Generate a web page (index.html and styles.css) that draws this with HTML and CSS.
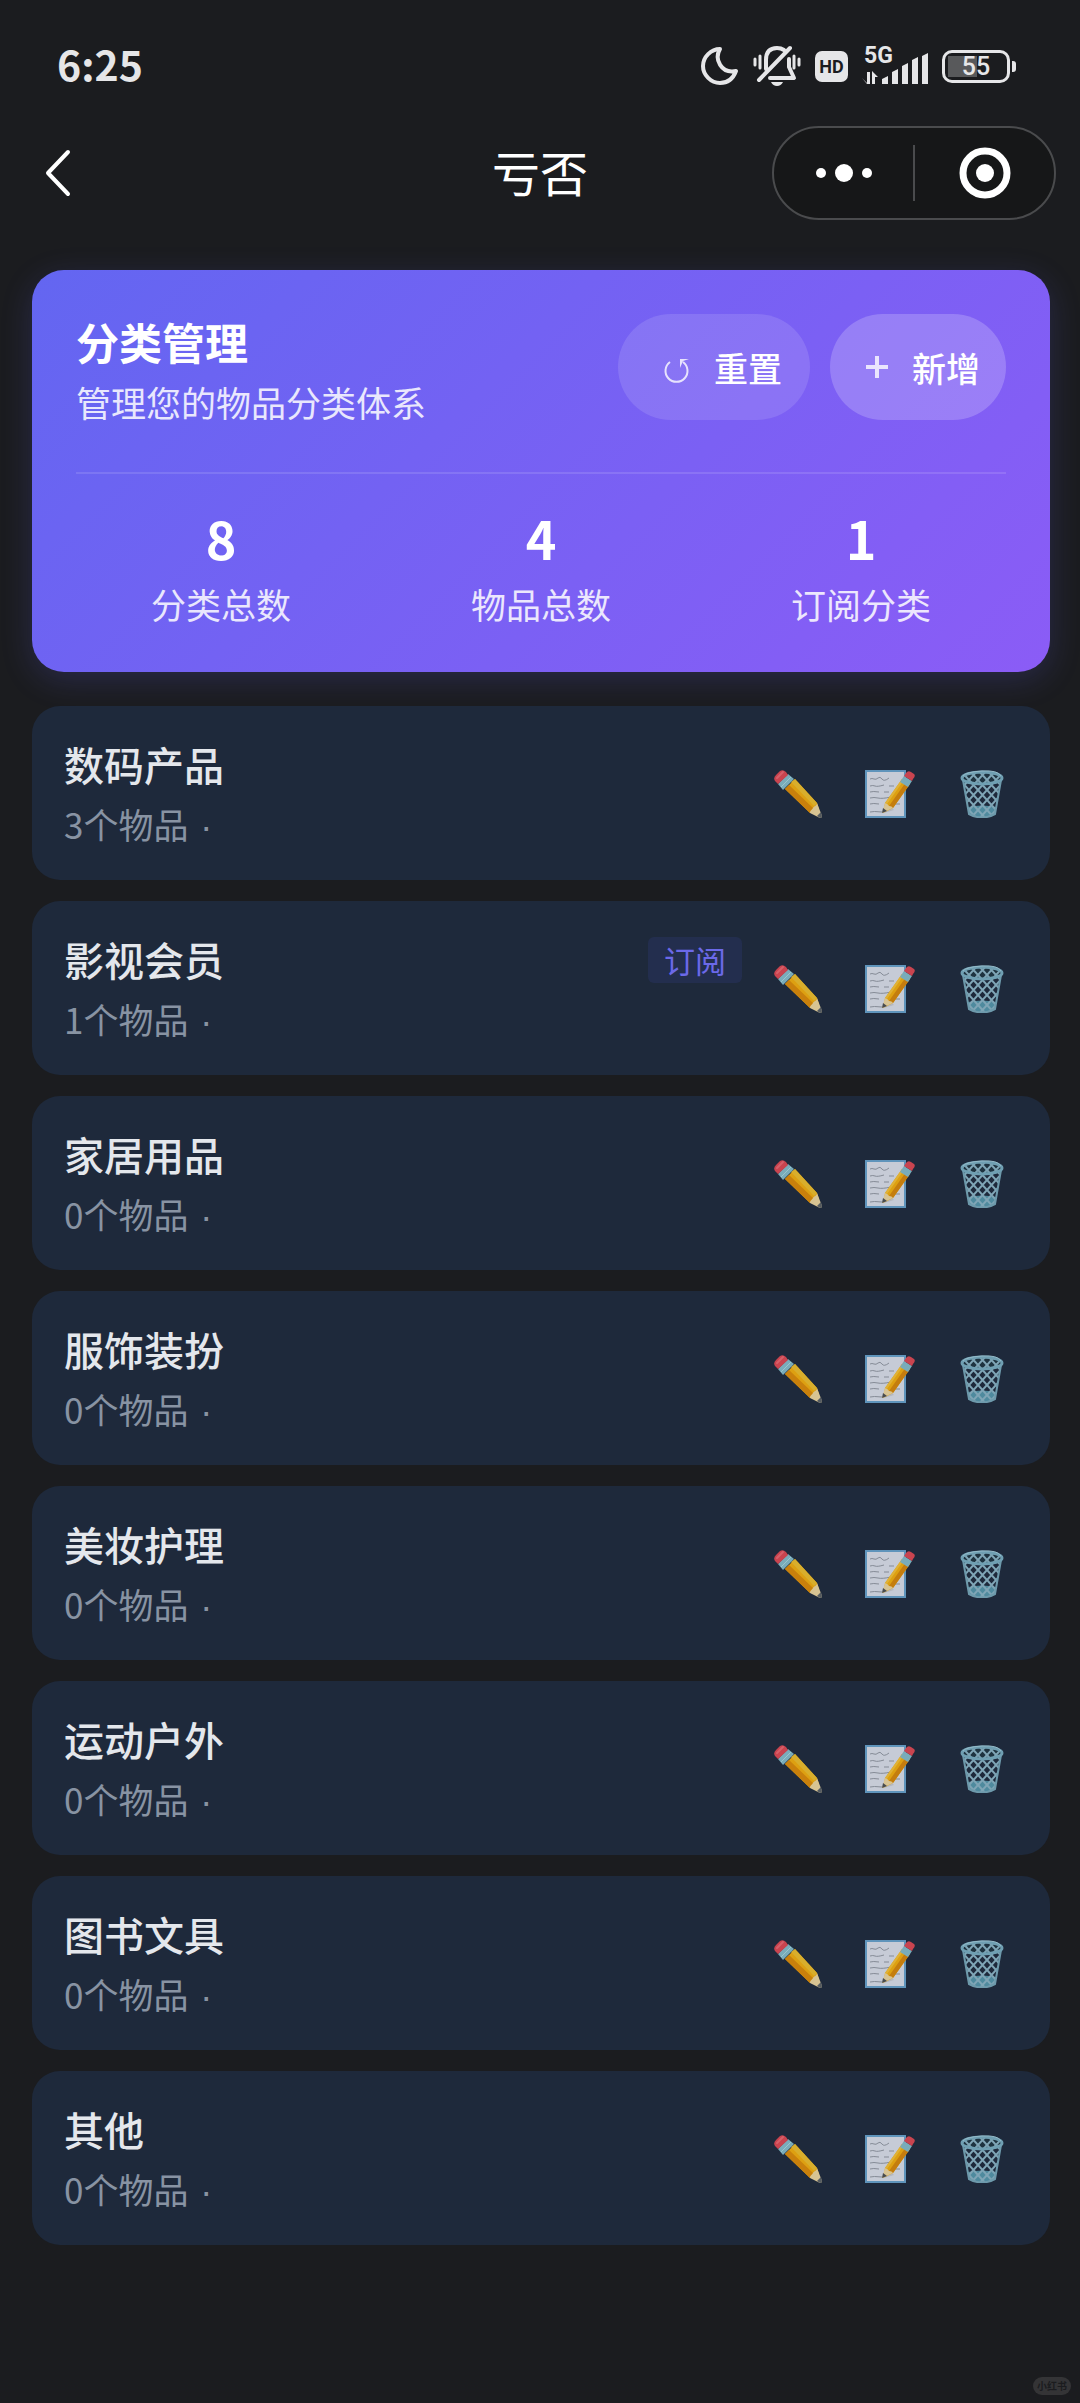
FILE: index.html
```html
<!DOCTYPE html>
<html lang="zh-CN">
<head>
  <meta charset="UTF-8">
  <meta name="viewport" content="width=device-width, initial-scale=1.0">
  <title>亏否</title>
  <link rel="stylesheet" href="styles.css">
</head>
<body>

  <!-- shared icons for the category rows -->
  <svg class="sprite" aria-hidden="true">
    <defs>
      <pattern id="mesh" width="9" height="10" patternUnits="userSpaceOnUse">
        <path d="M0 0L9 10M9 0L0 10" stroke="#7fa5b6" stroke-width="2" fill="none"/>
      </pattern>
    </defs>
    <symbol id="pencil" viewBox="0 0 48 48">
      <path d="M11 19L21 9L43 33L45 39L36 43Z" fill="#dda012"/>
      <path d="M11 19L15 15L39 38L36 43Z" fill="#c9800c"/>
      <path d="M21 9L17 12L40 36L43 33Z" fill="#d9ae2c"/>
      <path d="M36 43C36 40 38 40 39 38C40 36 43 36 43 33L48 46Q48 48 46 48Z" fill="#d8c493"/>
      <path d="M43 46L47 42L48 46Q48 48 46 48Z" fill="#555b60"/>
      <path d="M4 14L14 4L20 9L9 20Z" fill="#79acba"/>
      <path d="M7 17L17 7" stroke="#9bc5cd" stroke-width="1"/>
      <path d="M1 11Q-1 8 2 5L6 1Q9 -1 12 2L14 5L4 14Z" fill="#c9444f"/>
      <path d="M3 8L9 2" stroke="#d65f6a" stroke-width="2" stroke-linecap="round"/>
    </symbol>
    <symbol id="memo" viewBox="0 0 50 48">
      <rect x="1" y="1" width="39" height="46" fill="#c6cbd6" stroke="#5f94bb" stroke-width="2"/>
      <path d="M5 9q2-1 4 0t4-1 4 1 7-1M5 16q3-1 5 0t9-1M24 16h5M5 22q3-1 9 0M19 22h5M5 28q4-1 8 0t13-1M5 34q3-1 9 0M5 42q3-1 12 0M27 34h8" fill="none" stroke="#858b96" stroke-width="1"/>
      <path d="M19 43L29 40L24 35Z" fill="#b5b8bf"/>
      <path d="M18 43L20 33L37 9L45 14L28 38Z" fill="#dda012"/>
      <path d="M24 36L41 12L45 14L28 38Z" fill="#c47d0e"/>
      <path d="M20 33L37 9L39 10L22 34Z" fill="#e0b236"/>
      <path d="M17 43L20 33Q23 34 24 36Q27 36 28 38Z" fill="#d8c493"/>
      <path d="M17 43L18 38L22 41Z" fill="#474b50"/>
      <path d="M35 12L39 6L47 11L43 17Z" fill="#79acba"/>
      <path d="M39 6L41 3Q43 0 46 2L49 4Q51 6 48 9L47 11Z" fill="#c9444f"/>
    </symbol>
    <symbol id="trash" viewBox="0 0 44 48">
      <path d="M8 37Q22 34 36 37L35 44Q22 51 9 44Z" fill="#4f8a9e"/>
      <path d="M3 10L9 44Q22 51 35 44L41 10Z" fill="url(#mesh)"/>
      <path d="M3 10L9 44Q22 51 35 44L41 10" fill="none" stroke="#6d99ab" stroke-width="2"/>
      <ellipse cx="22" cy="8" rx="20" ry="6" fill="#1e3340"/>
      <ellipse cx="22" cy="8" rx="20" ry="6" fill="url(#mesh)" stroke="#6f9fb2" stroke-width="3"/>
      <path d="M3 6Q6 2 22 1T41 6" fill="none" stroke="#94bac8" stroke-width="1"/>
    </symbol>
  </svg>

  <div class="status-bar">
    <span class="time">6:25</span>
    <div class="status-icons">
      <svg class="moon" width="38" height="38" viewBox="0 0 38 38">
        <path d="M19 2C13 12 20 27 35 24C32 32 26 36 19 36C10 36 2 28 2 19C2 10 10 2 19 2Z" fill="none" stroke="#e6e6e8" stroke-width="4" stroke-linejoin="round"/>
      </svg>
      <svg class="bell" width="48" height="42" viewBox="0 0 48 42" fill="none" stroke="#e6e6e8" stroke-linecap="round">
        <path d="M2 14v6M7 11v12M41 11v12M46 14v6" stroke-width="3"/>
        <path d="M13 24V15Q13 3 24 3Q28 3 31 5M36 14V22L41 33H17" stroke-width="4" stroke-linejoin="round"/>
        <path d="M6 35L37 3" stroke-width="4"/>
        <path d="M18 37H30Q28 41 24 41T18 37Z" fill="#e6e6e8" stroke="none"/>
      </svg>
      <span class="hd">HD</span>
      <div class="signal">
        <span class="network">5G</span>
        <svg width="66" height="36" viewBox="0 0 66 36" fill="#e6e6e8">
          <path d="M0 30L5 35V24H8V36H5ZM10 36V23L16 29H13V36Z"/>
          <path d="M20 36V31L26 28V36ZM30 36V24L36 21V36ZM40 36V18L46 15V36ZM50 36V12L56 9V36ZM60 36V8L66 5V36Z"/>
        </svg>
      </div>
      <div class="battery"><span>55</span></div>
    </div>
  </div>

  <header class="nav">
    <button class="back" type="button" aria-label="返回">
      <svg width="28" height="48" viewBox="0 0 28 48">
        <path d="M24 3L4 24L24 45" fill="none" stroke="#fff" stroke-width="4" stroke-linecap="round" stroke-linejoin="round"/>
      </svg>
    </button>
    <h1>亏否</h1>
    <div class="capsule">
      <button type="button" aria-label="更多">
        <svg width="56" height="20" viewBox="0 0 56 20" fill="#fff">
          <circle cx="5" cy="10" r="5"/><circle cx="28" cy="10" r="9"/><circle cx="51" cy="10" r="5"/>
        </svg>
      </button>
      <button type="button" aria-label="关闭">
        <svg width="52" height="52" viewBox="0 0 52 52">
          <circle cx="26" cy="26" r="22" fill="none" stroke="#fff" stroke-width="7"/>
          <circle cx="26" cy="26" r="9" fill="#fff"/>
        </svg>
      </button>
    </div>
  </header>

  <main>
    <section class="summary">
      <div class="summary-head">
        <div>
          <h2>分类管理</h2>
          <p>管理您的物品分类体系</p>
        </div>
        <div class="buttons">
          <button class="reset" type="button">
            <svg width="28" height="28" viewBox="0 0 28 28">
              <path d="M8 5A11 11 0 1 0 21 5" fill="none" stroke="#fff" stroke-width="2"/>
              <path d="M18 11V2H27L21 4Z" fill="#fff"/>
            </svg>
            重置
          </button>
          <button class="add" type="button">
            <svg width="22" height="22" viewBox="0 0 22 22">
              <path d="M11 0V22M0 11H22" stroke="#fff" stroke-width="4"/>
            </svg>
            新增
          </button>
        </div>
      </div>
      <div class="stats">
        <div><strong>8</strong><span>分类总数</span></div>
        <div><strong>4</strong><span>物品总数</span></div>
        <div><strong>1</strong><span>订阅分类</span></div>
      </div>
    </section>

    <ul class="list">
      <li>
        <div class="info"><h3>数码产品</h3><p>3个物品 <i>·</i></p></div>
        <button type="button" aria-label="编辑"><svg width="48" height="48"><use href="#pencil"/></svg></button>
        <button type="button" aria-label="备注"><svg width="50" height="48"><use href="#memo"/></svg></button>
        <button type="button" aria-label="删除"><svg width="44" height="48"><use href="#trash"/></svg></button>
      </li>
      <li>
        <div class="info"><h3>影视会员</h3><p>1个物品 <i>·</i></p></div>
        <span class="badge">订阅</span>
        <button type="button" aria-label="编辑"><svg width="48" height="48"><use href="#pencil"/></svg></button>
        <button type="button" aria-label="备注"><svg width="50" height="48"><use href="#memo"/></svg></button>
        <button type="button" aria-label="删除"><svg width="44" height="48"><use href="#trash"/></svg></button>
      </li>
      <li>
        <div class="info"><h3>家居用品</h3><p>0个物品 <i>·</i></p></div>
        <button type="button" aria-label="编辑"><svg width="48" height="48"><use href="#pencil"/></svg></button>
        <button type="button" aria-label="备注"><svg width="50" height="48"><use href="#memo"/></svg></button>
        <button type="button" aria-label="删除"><svg width="44" height="48"><use href="#trash"/></svg></button>
      </li>
      <li>
        <div class="info"><h3>服饰装扮</h3><p>0个物品 <i>·</i></p></div>
        <button type="button" aria-label="编辑"><svg width="48" height="48"><use href="#pencil"/></svg></button>
        <button type="button" aria-label="备注"><svg width="50" height="48"><use href="#memo"/></svg></button>
        <button type="button" aria-label="删除"><svg width="44" height="48"><use href="#trash"/></svg></button>
      </li>
      <li>
        <div class="info"><h3>美妆护理</h3><p>0个物品 <i>·</i></p></div>
        <button type="button" aria-label="编辑"><svg width="48" height="48"><use href="#pencil"/></svg></button>
        <button type="button" aria-label="备注"><svg width="50" height="48"><use href="#memo"/></svg></button>
        <button type="button" aria-label="删除"><svg width="44" height="48"><use href="#trash"/></svg></button>
      </li>
      <li>
        <div class="info"><h3>运动户外</h3><p>0个物品 <i>·</i></p></div>
        <button type="button" aria-label="编辑"><svg width="48" height="48"><use href="#pencil"/></svg></button>
        <button type="button" aria-label="备注"><svg width="50" height="48"><use href="#memo"/></svg></button>
        <button type="button" aria-label="删除"><svg width="44" height="48"><use href="#trash"/></svg></button>
      </li>
      <li>
        <div class="info"><h3>图书文具</h3><p>0个物品 <i>·</i></p></div>
        <button type="button" aria-label="编辑"><svg width="48" height="48"><use href="#pencil"/></svg></button>
        <button type="button" aria-label="备注"><svg width="50" height="48"><use href="#memo"/></svg></button>
        <button type="button" aria-label="删除"><svg width="44" height="48"><use href="#trash"/></svg></button>
      </li>
      <li>
        <div class="info"><h3>其他</h3><p>0个物品 <i>·</i></p></div>
        <button type="button" aria-label="编辑"><svg width="48" height="48"><use href="#pencil"/></svg></button>
        <button type="button" aria-label="备注"><svg width="50" height="48"><use href="#memo"/></svg></button>
        <button type="button" aria-label="删除"><svg width="44" height="48"><use href="#trash"/></svg></button>
      </li>
    </ul>
  </main>

  <span class="watermark">小红书</span>

</body>
</html>
```

FILE: styles.css
```css
* {
  box-sizing: border-box;
  margin: 0;
  padding: 0;
}

body {
  position: relative;
  min-height: 100vh;
  background-color: #1b1c1f;
  color: #fff;
  font-family: "Noto Sans CJK SC", sans-serif;
}

button {
  border: none;
  background: none;
  color: inherit;
  font-family: inherit;
  cursor: pointer;
}

svg {
  display: block;
}

.sprite {
  position: absolute;
  width: 0;
  height: 0;
}

/* status bar */
.status-bar {
  display: flex;
  align-items: center;
  justify-content: space-between;
  height: 126px;
  padding: 6px 70px 0 57px;
  color: #e6e6e8;
}

.time {
  padding-bottom: 6px;
  font-size: 41px;
  font-weight: 700;
}

.status-icons {
  display: flex;
  align-items: center;
  gap: 14px;
}

.hd {
  width: 33px;
  height: 31px;
  border-radius: 7px;
  background-color: #e6e6e8;
  color: #1b1c1f;
  font: bold 18px/31px Roboto, sans-serif;
  text-align: center;
}

.signal {
  position: relative;
}

.network {
  position: absolute;
  top: -4px;
  left: 2px;
  font: bold 23px/24px Roboto, sans-serif;
}

.battery {
  position: relative;
  width: 68px;
  height: 33px;
  border: 3px solid #e6e6e8;
  border-radius: 10px;
  background: linear-gradient(#58595b, #58595b) 3px 3px / 29px 21px no-repeat;
  font: 500 25px/27px Roboto, sans-serif;
  text-align: center;
}

.battery::after {
  content: "";
  position: absolute;
  top: 8px;
  right: -9px;
  width: 4px;
  height: 11px;
  border-radius: 0 3px 3px 0;
  background-color: #e6e6e8;
}

/* navigation */
.nav {
  display: grid;
  grid-template-columns: 1fr auto 1fr;
  align-items: center;
  margin-bottom: 50px;
  padding: 0 24px;
}

.nav h1 {
  padding-bottom: 4px;
  font-size: 48px;
  font-weight: 400;
  line-height: 60px;
}

.back {
  justify-self: start;
  padding-left: 20px;
}

.capsule {
  display: flex;
  align-items: center;
  justify-self: end;
  width: 284px;
  height: 94px;
  border: 2px solid #4a4b4d;
  border-radius: 47px;
  background-color: #161718;
}

.capsule button {
  display: flex;
  flex: 1;
  align-items: center;
  justify-content: center;
  height: 56px;
}

.capsule button + button {
  border-left: 2px solid #4a4b4d;
}

/* summary card */
main {
  padding: 0 30px 0 32px;
}

.summary {
  padding: 44px 44px 46px;
  border-radius: 32px;
  background: linear-gradient(135deg, #6366f1, #8b5cf6);
  box-shadow: 0 8px 32px rgba(99, 102, 241, 0.2);
}

.summary-head {
  display: flex;
  align-items: flex-start;
  justify-content: space-between;
}

.summary h2 {
  font-size: 43px;
  font-weight: 700;
  line-height: 54px;
}

.summary p {
  margin-top: 10px;
  font-size: 35px;
  line-height: 48px;
  opacity: 0.85;
}

.buttons {
  display: flex;
  gap: 20px;
}

.buttons button {
  display: flex;
  align-items: center;
  gap: 24px;
  height: 106px;
  border-radius: 53px;
  font-size: 34px;
  font-weight: 500;
}

.buttons svg {
  opacity: 0.8;
}

.reset {
  padding: 0 28px 0 44px;
  background-color: rgba(255, 255, 255, 0.12);
}

.reset svg {
  margin-top: 8px;
}

.add {
  padding: 0 26px 0 36px;
  background-color: rgba(255, 255, 255, 0.2);
}

.stats {
  display: grid;
  grid-template-columns: repeat(3, 1fr);
  gap: 30px;
  margin-top: 46px;
  padding-top: 36px;
  border-top: 2px solid rgba(255, 255, 255, 0.12);
  text-align: center;
}

.stats strong {
  display: block;
  font-size: 52px;
  line-height: 56px;
}

.stats span {
  display: block;
  margin-top: 16px;
  font-size: 35px;
  line-height: 44px;
  opacity: 0.85;
}

/* category list */
.list {
  display: grid;
  gap: 21px;
  margin-top: 34px;
  list-style: none;
}

.list li {
  display: flex;
  align-items: center;
  gap: 20px;
  padding: 30px 32px 32px;
  border-radius: 28px;
  background-color: #1e293b;
}

.info {
  flex: 1;
}

.info h3 {
  color: #e4e7ec;
  font-size: 40px;
  font-weight: 500;
  line-height: 56px;
}

.info p {
  margin-top: 8px;
  color: #8893a3;
  font-size: 35px;
  line-height: 48px;
}

.info i {
  margin-left: 4px;
  font: 36px/1 "Liberation Sans", sans-serif;
}

.list button {
  display: flex;
  align-items: center;
  justify-content: center;
  width: 72px;
  height: 72px;
  padding-top: 4px;
}

.badge {
  align-self: flex-start;
  margin-top: 6px;
  padding: 0 16px;
  border-radius: 6px;
  background-color: #232e4e;
  color: #6b69e8;
  font-size: 31px;
  line-height: 46px;
}

.watermark {
  position: absolute;
  right: 9px;
  bottom: 8px;
  padding: 0 4px;
  border-radius: 9px;
  background-color: #343436;
  color: #1b1c1f;
  font-size: 10px;
  font-weight: 700;
  line-height: 18px;
}
```
